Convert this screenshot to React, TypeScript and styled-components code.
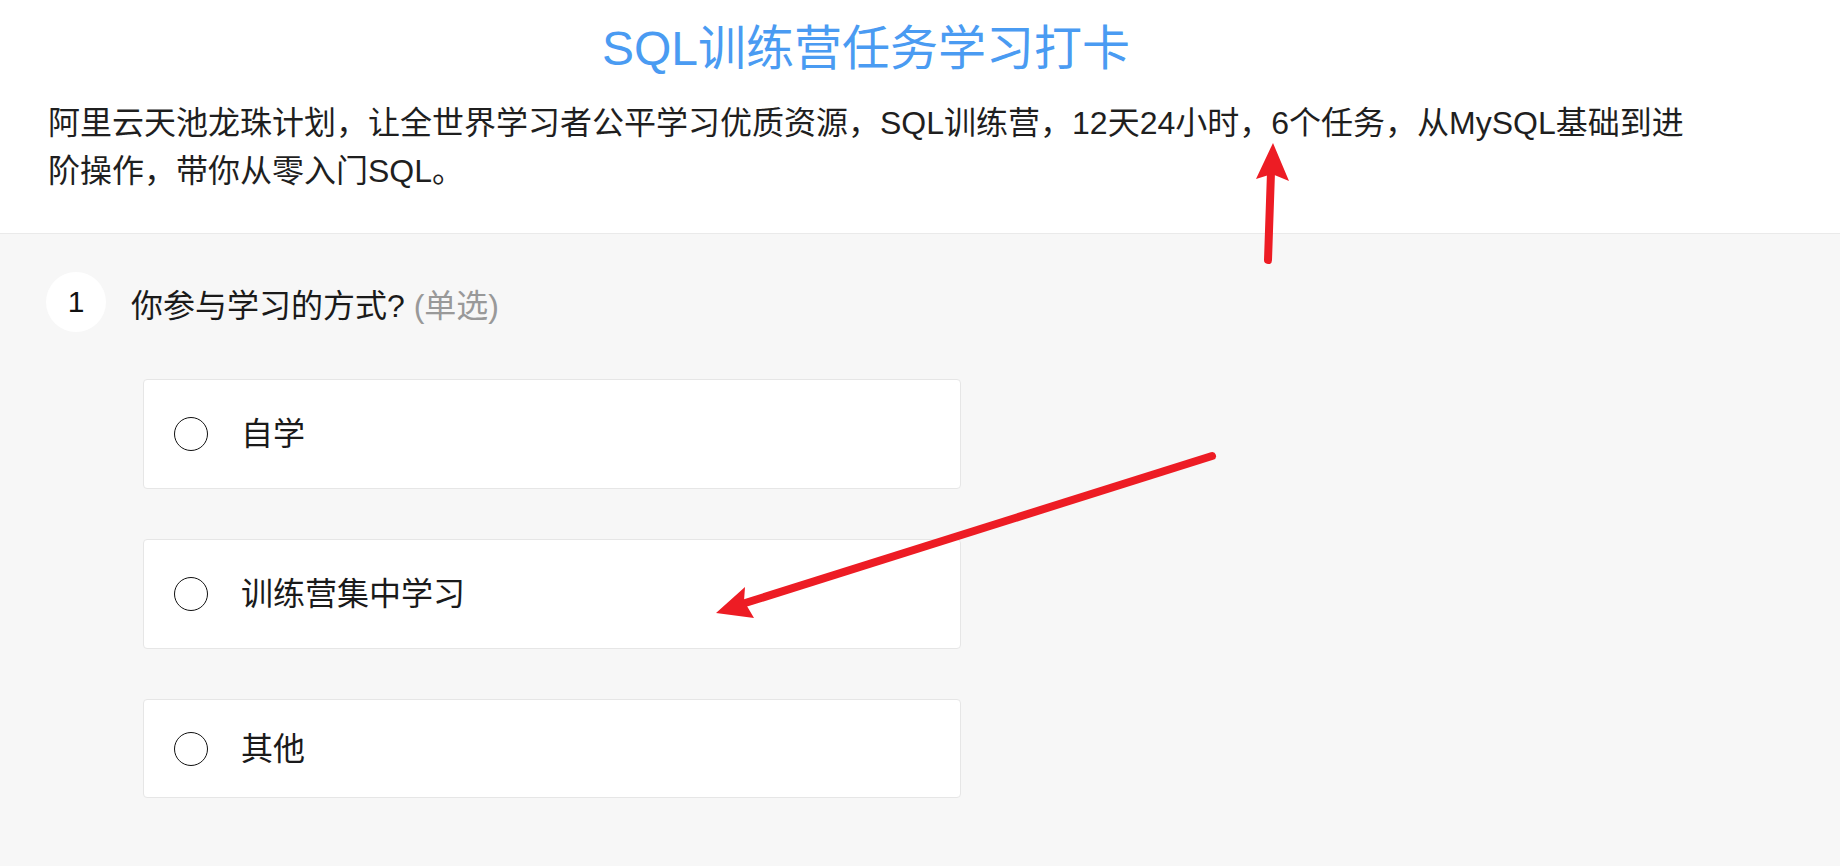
import styled, { createGlobalStyle } from 'styled-components';

const GlobalStyle = createGlobalStyle`
  html, body {
    margin: 0;
    padding: 0;
    background: #f7f7f7;
  }
  body {
    font-family: 'Liberation Sans', 'Noto Sans CJK SC', sans-serif;
    color: #1f1f1f;
  }
  * {
    box-sizing: border-box;
  }
`;

const options = [
  { id: 'self', label: '自学', height: 110 },
  { id: 'camp', label: '训练营集中学习', height: 110 },
  { id: 'other', label: '其他', height: 99 },
];

const App = () => {
  return (
    <>
      <GlobalStyle />
      <Page>
        <Header>
          <HeaderInner>
            <Title>SQL训练营任务学习打卡</Title>
            <Intro>
              阿里云天池龙珠计划，让全世界学习者公平学习优质资源，SQL训练营，12天24小时，6个任务，从MySQL基础到进阶操作，带你从零入门SQL。
            </Intro>
          </HeaderInner>
        </Header>
        <Main>
          <QuestionRow>
            <Badge>1</Badge>
            <QuestionText>
              你参与学习的方式? <Hint>(单选)</Hint>
            </QuestionText>
          </QuestionRow>
          <OptionList>
            {options.map((opt) => (
              <OptionCard key={opt.id} $height={opt.height}>
                <Radio />
                <OptionLabel>{opt.label}</OptionLabel>
              </OptionCard>
            ))}
          </OptionList>
        </Main>
        {/* annotation arrows drawn over the page */}
        <Annotations viewBox="0 0 1840 866">
          <line x1="1268" y1="260" x2="1271" y2="172" stroke="#ed1c24" strokeWidth="8" strokeLinecap="round" />
          <polygon points="1273,143 1289,181 1272,174 1256,179" fill="#ed1c24" />
          <line x1="1212" y1="456" x2="742" y2="604" stroke="#ed1c24" strokeWidth="8" strokeLinecap="round" />
          <polygon points="716,613 745,587 744,601 754,618" fill="#ed1c24" />
        </Annotations>
      </Page>
    </>
  );
};

export default App;

const Page = styled.div`
  position: relative;
  min-height: 100vh;
  display: flex;
  flex-direction: column;
`;

const Header = styled.header`
  background: #ffffff;
  border-bottom: 1px solid #eaeaea;
`;

const HeaderInner = styled.div`
  width: 1732px;
  padding: 21px 0 38px;
  display: flex;
  flex-direction: column;
`;

const Title = styled.h1`
  margin: 0;
  text-align: center;
  font-size: 48px;
  line-height: 56px;
  font-weight: 400;
  color: #4a9bf2;
`;

const Intro = styled.p`
  margin: 22px 0 0;
  padding: 0 40px 0 48px;
  font-size: 32px;
  line-height: 48px;
  color: #1f1f1f;
`;

const Main = styled.main`
  flex: 1;
  background: #f7f7f7;
  padding: 38px 0 60px;
`;

const QuestionRow = styled.div`
  display: flex;
  align-items: center;
  gap: 25px;
  padding-left: 46px;
`;

const Badge = styled.div`
  width: 60px;
  height: 60px;
  border-radius: 50%;
  background: #ffffff;
  display: flex;
  align-items: center;
  justify-content: center;
  font-size: 30px;
  color: #111;
`;

const QuestionText = styled.div`
  padding-top: 8px;
  font-size: 32px;
  line-height: 40px;
  color: #1a1a1a;
`;

const Hint = styled.span`
  color: #999999;
`;

const OptionList = styled.div`
  display: flex;
  flex-direction: column;
  gap: 50px;
  width: 818px;
  margin: 47px 0 0 143px;
`;

const OptionCard = styled.label<{ $height: number }>`
  height: ${(p) => p.$height}px;
  background: #ffffff;
  border: 1px solid #e6e6e6;
  border-radius: 4px;
  display: flex;
  align-items: center;
  gap: 33px;
  padding-left: 30px;
`;

const Radio = styled.span`
  width: 34px;
  height: 34px;
  border: 1.5px solid #111;
  border-radius: 50%;
  flex-shrink: 0;
`;

const OptionLabel = styled.span`
  font-size: 32px;
  line-height: 40px;
  color: #1a1a1a;
`;

const Annotations = styled.svg`
  position: absolute;
  top: 0;
  left: 0;
  width: 1840px;
  height: 866px;
  pointer-events: none;
`;
